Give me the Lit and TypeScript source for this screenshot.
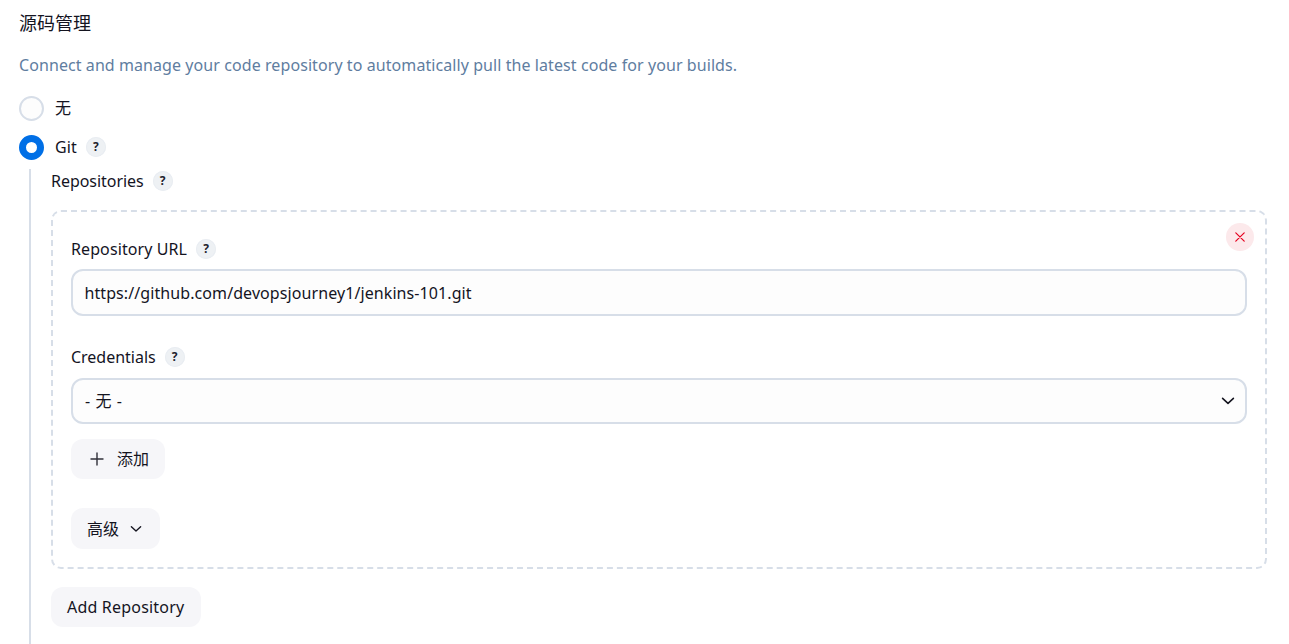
import { LitElement, html, css, svg } from "lit";
import { customElement, property } from "lit/decorators.js";

@customElement("help-badge")
class HelpBadge extends LitElement {
  static styles = css`
    :host { display: inline-flex; width: 20px; height: 20px; flex: none; align-items: center; justify-content: center; border-radius: 50%; background: #eef1f4; box-shadow: inset 0 0 0 1px #e9edf2; color: #22222c; font: 700 12px/20px "Noto Sans", sans-serif; }
  `;
  render() {
    return html`<span>?</span>`;
  }
}

@customElement("radio-option")
class RadioOption extends LitElement {
  @property({ type: Boolean }) checked = false;
  static styles = css`
    :host { display: flex; align-items: center; height: 25px; }
    .dot { box-sizing: border-box; width: 25px; height: 25px; border-radius: 50%; border: 2px solid #d7dee8; background: #fdfdfd; margin-right: 11px; flex: none; }
    .dot.on { border: 7px solid #006fe6; background: #fff; }
    .content { display: flex; align-items: center; height: 24px; padding-bottom: 1px; }
  `;
  render() {
    return html`<span class="dot ${this.checked ? "on" : ""}"></span><span class="content"><slot></slot></span>`;
  }
}

const chevron = (w: number) => html`<svg width=${w} height=${w} viewBox="0 0 14 14" fill="none" stroke="#14141f" stroke-width="1.6" stroke-linecap="round" stroke-linejoin="round">${svg`<path d="M1.6 4.4 7 9.3l5.4-4.9"/>`}</svg>`;

@customElement("app-root")
class AppRoot extends LitElement {
  static styles = css`
    :host { display: block; box-sizing: border-box; height: 644px; overflow: hidden; padding: 10px 22px 0 19px; background: #fff; color: #14141f; font: 16px/24px "Noto Sans", "Noto Sans CJK SC", sans-serif; }
    .title { margin: 0; font-size: 18px; line-height: 26px; font-weight: 400; }
    .desc { margin: 17px 0 19px; color: #607d9f; line-height: 24px; white-space: nowrap; }
    .git { margin-top: 14px; }
    .name { margin-right: 9px; white-space: nowrap; }
    .nested { margin: 9px 0 0 10px; padding-left: 20px; border-left: 2px solid #d7dee8; height: 475px; }
    .label { display: flex; align-items: center; height: 24px; }
    .chunk { box-sizing: border-box; position: relative; margin-top: 17px; height: 359px; border: 2px dashed #d7dee8; border-radius: 10px; padding: 25px 18px 0; }
    .remove { position: absolute; top: 11px; right: 11px; width: 28px; height: 28px; border-radius: 50%; background: #fce9eb; display: flex; align-items: center; justify-content: center; }
    .field { box-sizing: border-box; display: flex; align-items: center; justify-content: space-between; border: 2px solid #d7dee8; border-radius: 12px; background: #fdfdfd; padding: 0 10px 0 11.5px; margin-top: 8px; height: 47px; }
    .select { height: 46px; margin-top: 9px; }
    .second { margin-top: 29px; }
    .button { box-sizing: border-box; display: flex; align-items: center; width: max-content; height: 40px; border-radius: 12px; background: #f6f6f9; padding: 0 16px; white-space: nowrap; }
    .add { margin-top: 15px; width: 94px; padding-left: 19px; gap: 13px; }
    .advanced { margin-top: 29px; height: 41px; width: 89px; gap: 11px; }
    .add-repo { margin-top: 18px; width: 150px; }
    .t-desc { letter-spacing: 0.077px; }
    .t-git { letter-spacing: 0.1px; }
    .t-repos { letter-spacing: -0.04px; }
    .t-url { letter-spacing: 0.1px; }
    .t-cred { letter-spacing: -0.02px; }
    .t-add { letter-spacing: 0.2px; }
    .t-value { letter-spacing: 0.085px; }
    .t-none { letter-spacing: 0.6px; padding-left: 0.5px; }
    svg { display: block; flex: none; }
  `;
  render() {
    return html`
      <h2 class="title">源码管理</h2>
      <p class="desc"><span class="t-desc">Connect and manage your code repository to automatically pull the latest code for your builds.</span></p>
      <radio-option>无</radio-option>
      <radio-option class="git" checked><span class="name t-git">Git</span><help-badge></help-badge></radio-option>
      <section class="nested">
        <div class="label"><span class="name t-repos">Repositories</span><help-badge></help-badge></div>
        <div class="chunk">
          <div class="remove">
            <svg width="10" height="10" viewBox="0 0 10 10" stroke="#e6001f" stroke-width="1.2" stroke-linecap="round"><path d="M.8.8l8.4 8.4M9.2.8.8 9.2" /></svg>
          </div>
          <div class="label"><span class="name t-url">Repository URL</span><help-badge></help-badge></div>
          <div class="field"><span class="t-value">https://github.com/devopsjourney1/jenkins-101.git</span></div>
          <div class="label second"><span class="name t-cred">Credentials</span><help-badge></help-badge></div>
          <div class="field select"><span class="t-none">- 无 -</span>${chevron(14)}</div>
          <div class="button add">
            <svg width="14" height="14" viewBox="0 0 14 14" stroke="#30303a" stroke-width="1.4" stroke-linecap="round"><path d="M7 1v12M1 7h12" /></svg>
            <span>添加</span>
          </div>
          <div class="button advanced"><span>高级</span>${chevron(12)}</div>
        </div>
        <div class="button add-repo"><span class="t-add">Add Repository</span></div>
      </section>
    `;
  }
}
